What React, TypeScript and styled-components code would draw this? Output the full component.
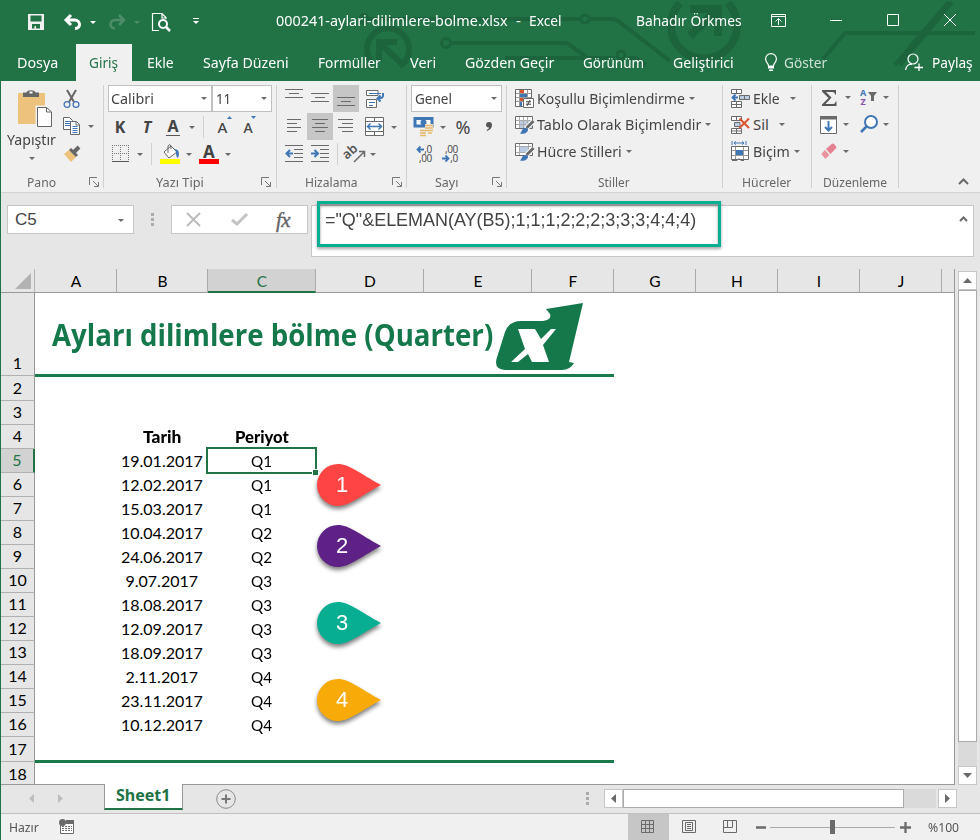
import React, { useLayoutEffect, useRef, useState } from "react";
import styled, { createGlobalStyle, css } from "styled-components";

const UI = `"Noto Sans", "Open Sans", sans-serif`;
const CELL = `Lato, "Open Sans", sans-serif`;
const ARIAL = `"Liberation Sans", Arial, sans-serif`;
const GREEN = "#217346";
const GREY = "#6a6a6a";
const BLUE = "#3f76b5";

const Global = createGlobalStyle`
  *, *::before, *::after { box-sizing: border-box; }
  body { margin: 0; background: #e6e6e6; overflow: hidden; }
`;

/* ---------- text that is condensed or widened to a given width ---------- */
const FitBox = styled.span<{ $w: number; $ml: number; $dy: number }>`
  display: block;
  flex: none;
  width: ${(p) => p.$w}px;
  margin-left: ${(p) => p.$ml}px;
  white-space: nowrap;
  ${(p) => p.$dy !== 0 && css`transform: translateY(${p.$dy}px);`}
`;
const FitInner = styled.span`
  display: inline-block;
  transform-origin: 0 50%;
`;
function Fit({ w, ml = 0, dy = 0, children }: { w: number; ml?: number; dy?: number; children: React.ReactNode }) {
  const ref = useRef<HTMLSpanElement>(null);
  const [scale, setScale] = useState(1);
  useLayoutEffect(() => {
    if (ref.current) setScale(w / ref.current.offsetWidth);
  }, [w]);
  return (
    <FitBox $w={w} $ml={ml} $dy={dy}>
      <FitInner ref={ref} style={{ transform: `scaleX(${scale})` }}>{children}</FitInner>
    </FitBox>
  );
}

const Svg = styled.svg<{ $ml: number; $mt: number }>`
  display: block;
  flex: none;
  overflow: visible;
  margin-left: ${(p) => p.$ml}px;
  margin-top: ${(p) => p.$mt}px;
`;
type IcProps = { w: number; h: number; ml?: number; mt?: number; children?: React.ReactNode };
const Ic = ({ w, h, ml = 0, mt = 0, children }: IcProps) => (
  <Svg width={w} height={h} viewBox={`0 0 ${w} ${h}`} fill="none" $ml={ml} $mt={mt}>{children}</Svg>
);
const Caret = ({ ml = 0, mt = -1, color = GREY }: { ml?: number; mt?: number; color?: string }) => (
  <Ic w={6} h={3} ml={ml} mt={mt}><path d="M0 0H6L3 3Z" fill={color} /></Ic>
);

/* ---------- window ---------- */
const Window = styled.div`
  width: 980px;
  height: 840px;
  display: flex;
  flex-direction: column;
  border-left: 1px solid ${GREEN};
  background: #e6e6e6;
  overflow: hidden;
`;
const Header = styled.header`
  position: relative;
  height: 81px;
  margin-left: -1px;
  flex: none;
  background: ${GREEN};
  color: #fff;
  font: 15px/20px ${UI};
`;
const Circuit = styled.svg`
  position: absolute;
  inset: 0;
`;
const TitleBar = styled.div`
  position: relative;
  height: 44px;
  display: flex;
  align-items: center;
`;
const Tabs = styled.nav`
  position: relative;
  height: 37px;
  display: flex;
  align-items: center;
  ${FitBox} { padding-bottom: 2px; }
`;
const ActiveTab = styled.div`
  width: 56px;
  height: 37px;
  margin-left: 18px;
  display: flex;
  align-items: center;
  background: #f0f0f0;
  color: ${GREEN};
`;
const Muted = styled.div`color: #cfe0d6;`;

/* ---------- ribbon ---------- */
const Ribbon = styled.section`
  height: 112px;
  flex: none;
  display: flex;
  padding-top: 4px;
  background: #f0f0f0;
  border-bottom: 1px solid #d2d2d2;
  color: #444;
  font: 15px/20px ${UI};
`;
const Group = styled.div<{ $w: number }>`
  width: ${(p) => p.$w}px;
  height: 103px;
  flex: none;
  display: flex;
  flex-direction: column;
  border-right: 1px solid #d0d0d0;
`;
const Row = styled.div<{ $mt?: number }>`
  height: 27px;
  margin-top: ${(p) => p.$mt ?? 0}px;
  display: flex;
  align-items: center;
  ${FitBox} { padding-bottom: 2px; }
`;
const Caption = styled.div`
  height: 20px;
  margin-top: auto;
  margin-bottom: -4px;
  display: flex;
  align-items: center;
  color: #666;
  font-size: 13px;
`;
const Columns = styled.div`display: flex;`;
const PasteColumn = styled.div`
  width: 60px;
  padding-top: 4px;
  display: flex;
  flex-direction: column;
`;
const ToolColumn = styled.div`flex: 1;`;
const Combo = styled.div<{ $w: number; $ml?: number }>`
  width: ${(p) => p.$w}px;
  height: 27px;
  flex: none;
  margin-left: ${(p) => p.$ml ?? 0}px;
  display: flex;
  align-items: center;
  justify-content: space-between;
  padding-right: 4px;
  background: #fff;
  border: 1px solid #c0c0c0;
`;
const Pressed = styled.div<{ $ml: number }>`
  width: 26px;
  height: 27px;
  flex: none;
  margin-left: ${(p) => p.$ml}px;
  display: flex;
  align-items: center;
  justify-content: center;
  background: #c6c6c6;
`;
const Divider = styled.i<{ $ml: number }>`
  width: 1px;
  height: 22px;
  margin-left: ${(p) => p.$ml}px;
  background: #d0d0d0;
`;
const Glyph = styled.span<{ $ml: number; $w: number; $size?: number; $italic?: boolean; $dy?: number; $weight?: number }>`
  width: ${(p) => p.$w}px;
  flex: none;
  display: flex;
  justify-content: center;
  margin-left: ${(p) => p.$ml}px;
  font-size: ${(p) => p.$size ?? 16}px;
  font-weight: ${(p) => p.$weight ?? 700};
  font-style: ${(p) => (p.$italic ? "italic" : "normal")};
  line-height: 20px;
  transform: translateY(${(p) => p.$dy ?? 0}px);
`;
const Underlined = styled(Glyph)`
  line-height: 17px;
  border-bottom: 1px solid #555;
`;
const ColorLetter = styled(Glyph)`
  line-height: 15px;
  height: 20px;
  border-bottom: 5px solid #f00;
`;
const Decimals = styled.div<{ $ml: number }>`
  width: 16px;
  margin-left: ${(p) => p.$ml}px;
  display: flex;
  flex-direction: column;
  font: 10px/9px "Open Sans", sans-serif;
  letter-spacing: -.3px;
`;
const DecimalLine = styled.div<{ $end?: boolean }>`
  height: 9px;
  display: flex;
  align-items: center;
  justify-content: ${(p) => (p.$end ? "flex-end" : "space-between")};
`;
const Collapse = styled.div`
  flex: 1;
  display: flex;
  justify-content: flex-end;
  align-items: flex-end;
  padding: 0 11px 7px 0;
`;

const Launcher = ({ ml }: { ml: number }) => (
  <Ic w={10} h={10} ml={ml - 1} mt={0}>
    <path d="M.5 8V.5H8M4 4l5 5M9.5 5v4.5H5" stroke="#777" />
  </Ic>
);
const Lines = ({ w, rows, ml = 0, mt = 0 }: { w: number; rows: [number, number][]; ml?: number; mt?: number }) => (
  <Ic w={w} h={rows.length * 3 + (rows.length - 1)} ml={ml} mt={mt}>
    {rows.map(([a, b], i) => <path key={i} d={`M${a} ${i * 4 + 0.5}H${b}`} stroke={GREY} />)}
  </Ic>
);
const IndentIcon = ({ ml, out }: { ml: number; out?: boolean }) => (
  <Ic w={18} h={17} ml={ml}>
    <path d="M0 .5H18M9 4.5h9M9 8.5h9M9 12.5h9M0 16.5H18" stroke={GREY} />
    {out ? <path d="M8 8.5H2M5 5 1.5 8.5 5 12" stroke={BLUE} strokeWidth="2" /> : <path d="M0 8.5H6.5M3.5 5 7 8.5 3.5 12" stroke={BLUE} strokeWidth="2" />}
  </Ic>
);
const BrushIcon = ({ full }: { full?: boolean }) => (
  <Ic w={19} h={18} ml={8} mt={-2}>
    <path d="M.5.5H17.5V12.5H.5Z" fill="#fff" stroke={GREY} />
    {full ? (
      <><path d="M5 5H17V12H5Z" fill="#b9cce4" /><path d="M1 4.5H17M1 8.5H17M4.5 1V12M8.5 1V12M12.5 1V12" stroke="#aaa" /></>
    ) : (
      <><path d="M5 4H13V9H5Z" fill="#b9cce4" /><path d="M1 3.5H17M4.5 1V12M13.5 1V12M1 9.5H17" stroke="#aaa" /></>
    )}
    <path d="M18.5 5 11 12.5" stroke="#fff" strokeWidth="5" />
    <path d="M18.5 5 11.5 12" stroke={GREY} strokeWidth="3" />
    <path d="M5 17.5C7 16 7 12 10 12c3 0 4 2 2 4-2 2-5 2-7 1.5Z" fill={BLUE} />
  </Ic>
);

const RibbonView = () => (
  <Ribbon>
    <Group $w={103}>
      <Columns>
        <PasteColumn>
          <Ic w={36} h={38} ml={16}>
            <path d="M1 4H28V35H1Z" fill="#ecc27d" />
            <path d="M6 8V3.5h3.5C10 .5 18 .5 18.500 3.500H22V8Z" fill="#666" />
            <path d="M12.500 2.500h3v2h-3Z" fill="#fff" />
            <path d="M18.500 16.500H30L36 22V38H18.500Z" fill="#f0f0f0" />
            <path d="M20.500 18.500H29.500L34.500 23V37.500H20.500Z" fill="#fff" stroke="#666" />
            <path d="M29.500 18.500V23H34.500" stroke="#666" />
          </Ic>
          <Fit w={49} ml={6} dy={2}>Yapıştır</Fit>
          <Caret ml={28} mt={10} />
        </PasteColumn>
        <ToolColumn>
          <Row>
            <Ic w={17} h={18} ml={2}>
              <path d="M4 0 11 12M13 0 6 12" stroke="#666" strokeWidth="2" />
              <circle cx="4" cy="14.500" r="2.900" stroke={BLUE} strokeWidth="1.300" />
              <circle cx="13" cy="14.500" r="2.900" stroke={BLUE} strokeWidth="1.300" />
            </Ic>
          </Row>
          <Row $mt={1}>
            <Ic w={17} h={18} ml={2} mt={-1}>
              <path d="M.5.5h6l3 3V12.500H.5Z" fill="#fff" stroke="#666" />
              <path d="M2 4.500h5M2 6.500h5M2 8.500h5" stroke={BLUE} />
              <path d="M7.500 4.500h6l3 3V17.500h-9Z" fill="#fff" stroke="#666" />
              <path d="M13 5v3h3" stroke="#666" /><path d="M9.500 9.500h5M9.500 11.500h5M9.500 13.500h5M9.500 15.500h5" stroke={BLUE} />
            </Ic>
            <Caret ml={8} />
          </Row>
          <Row>
            <Ic w={17} h={16} ml={3}>
              <path d="M0 8 5 4 12 11 7 16Z" fill="#ecc27d" />
              <path d="M6 3 13 10" stroke="#666" strokeWidth="3" /><path d="M9.500 6.500 15 1" stroke="#666" strokeWidth="4" />
            </Ic>
          </Row>
        </ToolColumn>
      </Columns>
      <Caption><Fit w={29} ml={26}>Pano</Fit><Launcher ml={34} /></Caption>
    </Group>

    <Group $w={173}>
      <Row>
        <Combo $w={104} $ml={4}><Fit w={43} ml={2}>Calibri</Fit><Caret /></Combo>
        <Combo $w={60}><Fit w={15} ml={3}>11</Fit><Caret /></Combo>
      </Row>
      <Row $mt={1}>
        <Glyph $w={10} $ml={11}>K</Glyph>
        <Glyph $w={10} $ml={17} $italic>T</Glyph>
        <Underlined $w={14} $ml={14}>A</Underlined>
        <Caret ml={9} mt={1} />
        <Divider $ml={8} />
        <Glyph $w={11} $ml={13} $size={15} $weight={500}>A</Glyph>
        <Ic w={5} h={3} ml={-1} mt={-18}><path d="M0 3H5L2.500 0Z" fill={BLUE} /></Ic>
        <Glyph $w={10} $ml={11} $size={14} $weight={500} $dy={1}>A</Glyph>
        <Ic w={5} h={3} ml={-2} mt={-18}><path d="M0 0H5L2.500 3Z" fill={BLUE} /></Ic>
      </Row>
      <Row>
        <Ic w={17} h={17} ml={8}>
          <path d="M.5 0V17M16.500 0V17M8.500 0V17M0 .5H17M0 8.500H17" stroke="#777" strokeDasharray="1 1" />
          <path d="M0 16.500H17" stroke="#555" />
        </Ic>
        <Caret ml={8} mt={1} />
        <Divider $ml={8} />
        <Ic w={20} h={20} ml={8}>
          <path d="M4 8 11 2 17 8 9 14Z" fill="#fff" stroke="#666" /><path d="M8 9V2q2-3 3 0v3" stroke="#666" />
          <path d="M14 5c5 0 6 4 4 9-2-1-2-5-2-6Z" fill={BLUE} />
          <path d="M0 15H20V20H0Z" fill="#ff0" />
        </Ic>
        <Caret ml={6} mt={1} />
        <ColorLetter $w={20} $ml={7} $size={17}>A</ColorLetter>
        <Caret ml={6} mt={1} />
      </Row>
      <Caption><Fit w={48} ml={52}>Yazı Tipi</Fit><Launcher ml={58} /></Caption>
    </Group>

    <Group $w={130}>
      <Row>
        <Lines w={18} ml={8} mt={-9} rows={[[0, 18], [4, 14], [0, 18]]} />
        <Lines w={18} ml={8} rows={[[0, 18], [4, 14], [0, 18]]} />
        <Pressed $ml={4}><Lines w={18} mt={8} rows={[[0, 18], [4, 14], [0, 18]]} /></Pressed>
        <Ic w={19} h={18} ml={7}>
          <path d="M.5.500H12V5.500H.5ZM.5 9.500H10.500V17.500H.5Z" fill="#fff" stroke={GREY} />
          <path d="M3 3.500H15M3 12.500h6M3 15.500h4" stroke={BLUE} strokeWidth="1.200" />
          <path d="M17 3v2.500c0 2-2 3-5 3M14.500 5.500 11.500 8.500l3 3" stroke={BLUE} strokeWidth="2" />
        </Ic>
      </Row>
      <Row $mt={1}>
        <Lines w={15} ml={10} rows={[[0, 14], [0, 10], [0, 14], [0, 10]]} />
        <Pressed $ml={5}><Lines w={16} rows={[[0, 16], [3, 13], [0, 16], [3, 13]]} /></Pressed>
        <Lines w={15} ml={5} rows={[[0, 15], [4, 15], [0, 15], [4, 15]]} />
        <Ic w={19} h={19} ml={12} mt={-1}>
          <path d="M.5.500H18.500V18.500H.5ZM.5 4.500h18M.5 14.500h18M9.500.500v4M9.500 14.500v4" fill="#fff" stroke={GREY} />
          <path d="M3 9.500H16M5.500 6.500 2.500 9.500l3 3M13.500 6.500l3 3-3 3" stroke={BLUE} strokeWidth="1.500" />
        </Ic>
        <Caret ml={7} mt={1} />
      </Row>
      <Row>
        <IndentIcon ml={8} out />
        <IndentIcon ml={8} />
        <Divider $ml={8} />
        <Ic w={19} h={18} ml={8}>
          <text x="0" y="5" fontSize="13" fontWeight="600" fill="#555" transform="rotate(-42 6 9) translate(-2 5)">ab</text>
          <path d="M8 17 18 7M13 6.500H18.500V12" stroke={GREY} strokeWidth="1.500" />
        </Ic>
        <Caret ml={5} mt={1} />
      </Row>
      <Caption><Fit w={53} ml={28}>Hizalama</Fit><Launcher ml={35} /></Caption>
    </Group>

    <Group $w={100}>
      <Row><Combo $w={91} $ml={4}><Fit w={37} ml={3}>Genel</Fit><Caret /></Combo></Row>
      <Row $mt={1}>
        <Ic w={20} h={19} ml={7}>
          <path d="M1 1.500H18V9H1Z" fill="#fff" stroke={BLUE} strokeWidth="3" />
          <circle cx="9.500" cy="5.500" r="3" fill={BLUE} />
          <path d="M11 7h8v11H5v-5h6Z" fill="#f0f0f0" />
          <path d="M11 8.500h8M11 11h8M12 13.500h7M6 13.500h6M6 16h6M6 18.500h6M14 16h4" stroke="#e5b76c" strokeWidth="1.700" />
        </Ic>
        <Caret ml={6} mt={1} />
        <Glyph $w={16} $ml={9} $size={18} $weight={400}>%</Glyph>
        <Ic w={6} h={9} ml={15} mt={-1}><path d="M0 3a3 3 0 1 1 6 0c0 3-2 5-5 6l-.4-1C2 7.500 3 6.500 3 5.500 1 5.500 0 4.500 0 3Z" fill="#555" /></Ic>
      </Row>
      <Row>
        <Decimals $ml={9}>
          <DecimalLine><Ic w={8} h={7}><path d="M8 3.500H2M4.500.5l-3 3 3 3" stroke={BLUE} strokeWidth="1.800" /></Ic>,0</DecimalLine>
          <DecimalLine $end>,00</DecimalLine>
        </Decimals>
        <Decimals $ml={10}>
          <DecimalLine $end>,00</DecimalLine>
          <DecimalLine><Ic w={8} h={7}><path d="M0 3.500H6M3.500.5l3 3-3 3" stroke={BLUE} strokeWidth="1.800" /></Ic>,0</DecimalLine>
        </Decimals>
      </Row>
      <Caption><Fit w={23} ml={28}>Sayı</Fit><Launcher ml={35} /></Caption>
    </Group>

    <Group $w={216}>
      <Row>
        <Ic w={19} h={19} ml={8} mt={-1}>
          <path d="M.5.500H16.500V17.500H.5Z" fill="#fff" stroke={GREY} />
          <path d="M1 4.500H16M1 8.500H16M1 12.500H16M4.500 1V17M12.500 1V17" stroke="#999" />
          <path d="M5 1h4v3H5ZM5 9h3v3H5Z" fill="#d9532c" /><path d="M5 5h7v3H5ZM5 13h2v4H5Z" fill={BLUE} />
          <path d="M8.500 9.500H18.500V18.500H8.500Z" fill="#fff" stroke={GREY} />
          <path d="M11 12.800h5M11 15.200h5M15 11l-3 6" stroke="#444" />
        </Ic>
        <Fit w={148} ml={3}>Koşullu Biçimlendirme</Fit><Caret ml={4} />
      </Row>
      <Row>
        <BrushIcon full />
        <Fit w={164} ml={3} dy={-1}>Tablo Olarak Biçimlendir</Fit><Caret ml={4} mt={-2} />
      </Row>
      <Row>
        <BrushIcon />
        <Fit w={85} ml={3} dy={-1}>Hücre Stilleri</Fit><Caret ml={4} mt={-2} />
      </Row>
      <Caption><Fit w={32} ml={91}>Stiller</Fit></Caption>
    </Group>

    <Group $w={89}>
      <Row>
        <Ic w={19} h={19} ml={8} mt={-1}>
          <path d="M.5.500H10.500V4.500H.5ZM5.500.500v4M.5 12.500H10.500V18.500H.5ZM.5 15.500H10.500M5.500 12.500v6" fill="#fff" stroke={GREY} />
          <path d="M8.500 6.500H18.500V10.500H8.500ZM13.500 6.500v4" fill="#b9cce4" stroke={GREY} />
          <path d="M7 8.500H1.500M4.500 5.500l-3 3 3 3" stroke={BLUE} strokeWidth="1.800" />
        </Ic>
        <Fit w={27} ml={3}>Ekle</Fit><Caret ml={10} />
      </Row>
      <Row>
        <Ic w={19} h={18} ml={8} mt={-2}>
          <path d="M.5.500H10.500V4.500H.5ZM5.500.500v4M.5 12.500H10.500V17.500H.5ZM.5 15H10.500M5.500 12.500v5" fill="#fff" stroke={GREY} />
          <path d="M3.500 6.500H9V10.500H3.500Z" fill="#b9cce4" stroke={GREY} />
          <path d="M8.500 2.500 18 12M18 2.500 8.500 12" stroke="#d9532c" strokeWidth="2" />
        </Ic>
        <Fit w={16} ml={3} dy={-1}>Sil</Fit><Caret ml={10} mt={-2} />
      </Row>
      <Row>
        <Ic w={18} h={20} ml={8} mt={-4}>
          <path d="M1 0V4M15 0V4M3 2H13M5 .3 3 2l2 1.700M11 .3 13 2l-2 1.700" stroke={BLUE} />
          <path d="M.5 5.500H17.500V18.500H.5Z" fill="#fff" stroke={GREY} />
          <path d="M1 9.500H17M1 14.500H17M4.500 6V18M12.500 6V18" stroke="#999" />
          <path d="M5 9H12V14H5Z" fill={BLUE} /><path d="M1 19.500h5l2-2 2 2h3" stroke={GREY} />
        </Ic>
        <Fit w={37} ml={4} dy={-1}>Biçim</Fit><Caret ml={4} mt={-2} />
      </Row>
      <Caption><Fit w={49} ml={19}>Hücreler</Fit></Caption>
    </Group>

    <Group $w={87}>
      <Row>
        <Ic w={15} h={16} ml={10} mt={-2}>
          <path d="M0 0H14V4.500H13Q13 2 10.500 2H4L9.500 7.500 3.500 14H11Q13.500 14 13.500 11.500H14.500V16H0V14.500L6.500 8 0 1.500Z" fill="#555" />
        </Ic>
        <Caret ml={8} mt={-2} />
        <Ic w={18} h={18} ml={9} mt={-3}>
          <text x="0" y="8" fontSize="9" fontWeight="700" fill={BLUE}>A</text>
          <text x="0.500" y="16.500" fontSize="9" fontWeight="700" fill="#8a50a8">Z</text>
          <path d="M8 4H17L14 8V13H11V8Z" fill={GREY} />
        </Ic>
        <Caret ml={5} mt={-2} />
      </Row>
      <Row>
        <Ic w={17} h={18} ml={8} mt={-2}>
          <path d="M.5.500H16.500V17.500H.5Z" fill="#fff" stroke={GREY} /><path d="M0 0H17V3.500H0Z" fill={GREY} />
          <path d="M8.500 5V14M5 11l3.500 3.500L12 11" stroke={BLUE} strokeWidth="2" />
        </Ic>
        <Caret ml={6} mt={-2} />
        <Ic w={18} h={18} ml={11} mt={-3}><circle cx="11" cy="7" r="6" fill="#fff" stroke={BLUE} strokeWidth="2" /><path d="M7 11 1 17" stroke={BLUE} strokeWidth="2.500" /></Ic>
        <Caret ml={5} mt={-2} />
      </Row>
      <Row>
        <Ic w={16} h={16} ml={9} mt={-3}>
          <path d="M5 6 11 .8q1-.8 2 .2l2 2.300q1 1 0 2L9.500 11Z" fill="#e4808f" /><path d="M4 7 8.500 12 5.500 15Q4.500 16 3.500 15L1 12Q0 11 1 10Z" fill="#e9949f" />
        </Ic>
        <Caret ml={6} mt={-2} />
      </Row>
      <Caption><Fit w={64} ml={11}>Düzenleme</Fit></Caption>
    </Group>
    <Collapse><Ic w={11} h={7}><path d="M1 6 5.500 1.500 10 6" stroke={GREY} strokeWidth="2" /></Ic></Collapse>
  </Ribbon>
);

/* ---------- formula bar ---------- */
const FormulaBar = styled.section`
  position: relative;
  height: 76px;
  flex: none;
  display: flex;
  align-items: flex-start;
  padding: 12px 0 0 6px;
  font: 17px/20px ${ARIAL};
  color: #444;
`;
const Box = styled.div<{ $w: number; $h?: number; $ml?: number }>`
  width: ${(p) => p.$w}px;
  height: ${(p) => p.$h ?? 29}px;
  margin-left: ${(p) => p.$ml ?? 0}px;
  flex: none;
  display: flex;
  align-items: ${(p) => (p.$h ? "flex-start" : "center")};
  background: #fff;
  border: 1px solid #c6c6c6;
`;
const FormulaText = styled.div`
  padding-top: 4px;
  font-size: 18px;
`;
const Highlight = styled.div`
  position: absolute;
  left: 316px;
  top: 8px;
  width: 404px;
  height: 46px;
  border: 3px solid #0aae92;
  box-shadow: 0 2px 3px rgba(0, 0, 0, .35), inset 0 2px 3px rgba(0, 0, 0, .4);
`;
const Fx = styled.span`
  margin-left: 28px;
  font: italic 400 21px/20px "Liberation Serif", serif;
  color: #666;
  letter-spacing: -.5px;
  -webkit-text-stroke: .4px #666;
`;
const Dots = ({ ml, mt }: { ml: number; mt: number }) => (
  <Ic w={3} h={13} ml={ml} mt={mt}><path d="M0 0h3v3H0ZM0 5h3v3H0ZM0 10h3v3H0Z" fill="#ababab" /></Ic>
);

/* ---------- sheet ---------- */
const COLS: [string, number][] = [["A", 82], ["B", 91], ["C", 108], ["D", 108], ["E", 108], ["F", 82], ["G", 82], ["H", 82], ["I", 82], ["J", 82]];
const Main = styled.main`
  height: 515px;
  flex: none;
  display: flex;
`;
const Sheet = styled.div`
  width: 954px;
  height: 516px;
  flex: none;
  overflow: hidden;
  font: 16px/20px ${CELL};
  color: #000;
  background: #fff;
  border-right: 1px solid #999;
  border-bottom: 1px solid #999;
`;
const HeadRow = styled.div`
  height: 24px;
  display: flex;
  background: #e6e6e6;
  border-bottom: 1px solid #999;
`;
const Corner = styled.div`
  width: 34px;
  flex: none;
  padding: 4px 0 0 14px;
  border-right: 1px solid #b5b5b5;
`;
const ColHead = styled.div<{ $w: number; $on?: boolean }>`
  width: ${(p) => p.$w}px;
  flex: none;
  height: 24px;
  padding-top: 2px;
  padding-left: 1px;
  text-align: center;
  font-size: 15.5px;
  border-right: 1px solid #aaa;
  ${(p) => p.$on && css`background: #d2d2d2; color: ${GREEN}; border-bottom: 2px solid ${GREEN};`}
`;
const Line = styled.div<{ $h: number; $title?: boolean }>`
  position: relative;
  height: ${(p) => p.$h}px;
  display: flex;
  align-items: ${(p) => (p.$title ? "flex-end" : "center")};
`;
const RowHead = styled.div<{ $on?: boolean }>`
  align-self: stretch;
  width: 34px;
  flex: none;
  display: flex;
  align-items: flex-end;
  justify-content: center;
  padding-bottom: 2px;
  background: ${(p) => (p.$on ? "#d2d2d2" : "#e6e6e6")};
  color: ${(p) => (p.$on ? GREEN : "#000")};
  border-bottom: 1px solid #b0b0b0;
  border-right: ${(p) => (p.$on ? `2px solid ${GREEN}` : "1px solid #999")};
`;
const Cell = styled.div<{ $w: number; $bold?: boolean }>`
  position: relative;
  width: ${(p) => p.$w}px;
  height: 24px;
  flex: none;
  display: flex;
  align-items: center;
  justify-content: center;
  padding-right: 1px;
  font-weight: ${(p) => (p.$bold ? 900 : 400)};
`;
const Selection = styled.i`
  position: absolute;
  left: -2px;
  top: -2px;
  width: 111px;
  height: 27px;
  border: 2px solid ${GREEN};
  &::after {
    content: "";
    position: absolute;
    right: -3px;
    bottom: -3px;
    width: 6px;
    height: 6px;
    background: ${GREEN};
    border: solid #fff;
    border-width: 1px 0 0 1px;
  }
`;
const Rule = styled.i`
  position: absolute;
  left: 34px;
  bottom: -1px;
  width: 579px;
  height: 3px;
  background: #1a7a4c;
  z-index: 1;
`;
const SheetTitle = styled.div`
  height: 83px;
  display: flex;
  align-items: flex-start;
  padding-top: 22px;
  font: 700 30px/40px "Open Sans", ${CELL};
  color: #14784b;
`;
const Pin = styled.div<{ $top: number }>`
  position: absolute;
  left: 316px;
  top: ${(p) => p.$top}px;
  width: 65px;
  height: 42px;
  filter: drop-shadow(0 3px 2px rgba(0, 0, 0, .5));
  z-index: 2;
`;
const PinLabel = styled.span`
  position: absolute;
  left: 0;
  top: 0;
  width: 50px;
  text-align: center;
  font: 22px/42px ${ARIAL};
  color: #fff;
`;

type RowData = { date: string; period: string; w?: number };
const DATA: RowData[] = [
  { date: "19.01.2017", period: "Q1" }, { date: "12.02.2017", period: "Q1" }, { date: "15.03.2017", period: "Q1" },
  { date: "10.04.2017", period: "Q2" }, { date: "24.06.2017", period: "Q2" }, { date: "9.07.2017", period: "Q3", w: 73 },
  { date: "18.08.2017", period: "Q3" }, { date: "12.09.2017", period: "Q3" }, { date: "18.09.2017", period: "Q3" },
  { date: "2.11.2017", period: "Q4", w: 73 }, { date: "23.11.2017", period: "Q4" }, { date: "10.12.2017", period: "Q4" },
];
const PINS: { label: string; color: string; row: number; top: number }[] = [
  { label: "1", color: "#ff4444", row: 5, top: 15 },
  { label: "2", color: "#5e2186", row: 8, top: 4 },
  { label: "3", color: "#08ae92", row: 11, top: 9 },
  { label: "4", color: "#f8aa08", row: 14, top: 14 },
];

const VBar = styled.div`
  width: 25px;
  padding: 2px 0 0 3px;
  display: flex;
  flex-direction: column;
`;
const ScrollButton = styled.div`
  width: 19px;
  height: 19px;
  flex: none;
  display: flex;
  align-items: center;
  justify-content: center;
  background: #fff;
  border: 1px solid #c6c6c6;
`;
const Thumb = styled.div<{ $w: number; $h: number }>`
  width: ${(p) => p.$w}px;
  height: ${(p) => p.$h}px;
  flex: none;
  background: #fff;
  border: 1px solid #ababab;
`;
const Track = styled.div<{ $w: number; $h: number; $gap?: number }>`
  width: ${(p) => p.$w}px;
  height: ${(p) => p.$h}px;
  margin-right: ${(p) => p.$gap ?? 0}px;
  flex: none;
  background: #dadada;
`;

/* ---------- bottom bars ---------- */
const SheetBar = styled.div`
  height: 29px;
  flex: none;
  display: flex;
  align-items: flex-start;
`;
const SheetTab = styled.div`
  width: 79px;
  height: 26px;
  margin-left: 41px;
  padding-top: 1px;
  display: flex;
  background: #fff;
  color: ${GREEN};
  border: solid #999;
  border-width: 0 1px;
  border-bottom: 2px solid ${GREEN};
  font: 700 16px/20px ${UI};
  position: relative;
`;
const HBar = styled.div`
  height: 19px;
  display: flex;
  margin: 5px 0 0 15px;
`;
const StatusBar = styled.footer`
  height: 27px;
  flex: none;
  display: flex;
  align-items: center;
  background: #f0f0f0;
  border-top: 1px solid #c0c0c0;
  color: #555;
  font: 13px/18px ${UI};
`;
const ViewOn = styled.div`
  width: 41px;
  height: 27px;
  margin-left: 554px;
  display: flex;
  align-items: center;
  justify-content: center;
  background: #c6c6c6;
`;

export default function App() {
  return (
    <Window>
      <Global />
      <Header>
        <Circuit width="980" height="81" viewBox="0 0 980 81" fill="none" stroke="#1c653c">
          <circle cx="364" cy="19" r="4" strokeWidth="4" /><path d="M370 19H580M590 19h22q3 0 6 2L670 61" strokeWidth="4" />
          <circle cx="585" cy="19" r="4" strokeWidth="3" />
          <path d="M373 64a21 21 0 1 1 30 0" strokeWidth="6" /><path d="M379 62V42H397M382 45 404 66" strokeWidth="6" />
          <circle cx="446" cy="43" r="4.500" strokeWidth="3" /><path d="M451 43H567L588 58M505 58H615M628 58h8l10 7" strokeWidth="4" />
          <circle cx="621" cy="55" r="4" strokeWidth="3" />
          <path d="M680 3a33 33 0 1 0 48 0" strokeWidth="8" /><path d="M690 9H718V36M716 11 690 36" strokeWidth="8" />
          <path d="M823 59 845 33H975M900 65 952 2M920 35 949 2M895 65 920 35" strokeWidth="4" />
        </Circuit>
        <TitleBar>
          <Ic w={16} h={16} ml={28}><path d="M0 0H16V16H0Z" fill="#f0f0f0" /><path d="M2.500 1.500h11v6h-11ZM4 10h8v4.500H8V12H6.500v2.500H4Z" fill={GREEN} /></Ic>
          <Ic w={18} h={16} ml={20}><path d="M7 1 2 6l5 5M2 6h9c5 0 7 8 0 8.500" stroke="#fff" strokeWidth="3" /></Ic>
          <Ic w={6} h={3} ml={8}><path d="M0 0H6L3 3Z" fill="#fff" /></Ic>
          <Ic w={18} h={16} ml={12}><path d="M11 1l5 5-5 5M16 6H7c-5 0-7 8 0 8.500" stroke="#4d8d69" strokeWidth="2.500" /></Ic>
          <Ic w={6} h={3} ml={8}><path d="M0 0H6L3 3Z" fill="#4d8d69" /></Ic>
          <Ic w={19} h={19} ml={12}>
            <path d="M7 17.500H.5V.500H10l4 4V6M10 .500V5h4" stroke="#fff" strokeWidth="1.200" />
            <circle cx="11" cy="11" r="4" stroke="#fff" strokeWidth="2" /><path d="M14 14l4 4" stroke="#fff" strokeWidth="2.500" />
          </Ic>
          <Ic w={6} h={6} ml={22} mt={-2}><path d="M0 .500H6" stroke="#fff" /><path d="M0 3H6L3 6Z" fill="#fff" /></Ic>
          <Fit w={232} ml={77} dy={-2}>000241-aylari-dilimlere-bolme.xlsx</Fit>
          <Fit w={5} ml={8} dy={-2}>-</Fit>
          <Fit w={33} ml={8} dy={-2}>Excel</Fit>
          <Fit w={106} ml={74} dy={-2}>Bahadır Örkmes</Fit>
          <Ic w={15} h={13} ml={29} mt={-3}><path d="M.5.500H14.500V12.500H.5ZM.5 2.500h14M7.500 11V4.500M4.500 7.500l3-3 3 3" stroke="#fff" /></Ic>
          <Ic w={12} h={1} ml={44} mt={-4}><path d="M0 .500H12" stroke="#fff" /></Ic>
          <Ic w={12} h={12} ml={45} mt={-4}><path d="M.5.500H11.500V11.500H.5Z" stroke="#fff" /></Ic>
          <Ic w={12} h={12} ml={45} mt={-4}><path d="M0 0 12 12M12 0 0 12" stroke="#fff" /></Ic>
        </TitleBar>
        <Tabs>
          <Fit w={41} ml={17}>Dosya</Fit>
          <ActiveTab><Fit w={29} ml={13}>Giriş</Fit></ActiveTab>
          <Fit w={27} ml={15}>Ekle</Fit>
          <Fit w={86} ml={29}>Sayfa Düzeni</Fit>
          <Fit w={63} ml={29}>Formüller</Fit>
          <Fit w={26} ml={29}>Veri</Fit>
          <Fit w={89} ml={29}>Gözden Geçir</Fit>
          <Fit w={61} ml={29}>Görünüm</Fit>
          <Fit w={61} ml={29}>Geliştirici</Fit>
          <Ic w={12} h={18} ml={31} mt={-1}>
            <path d="M3.500 13C3.500 10 .6 9.500.6 6a5.400 5.400 0 0 1 10.800 0c0 3.500-2.900 4-2.900 7Z" stroke="#fff" strokeWidth="1.200" /><path d="M3 13H9V15.500H3ZM4 16.500H8V18H4Z" fill="#fff" />
          </Ic>
          <Muted><Fit w={43} ml={7}>Göster</Fit></Muted>
          <Ic w={18} h={18} ml={78} mt={-1}><circle cx="8" cy="6" r="5" stroke="#fff" strokeWidth="1.200" /><path d="M.6 17C1 13 4 11 7 11M14 10.500V18M9.500 14.500H18" stroke="#fff" strokeWidth="1.300" /></Ic>
          <Fit w={41} ml={9}>Paylaş</Fit>
        </Tabs>
      </Header>

      <RibbonView />

      <FormulaBar>
        <Box $w={127}><Fit w={22} ml={7}>C5</Fit><Caret ml={81} mt={1} /></Box>
        <Dots ml={17} mt={8} />
        <Box $w={137} $ml={17}>
          <Ic w={15} h={13} ml={14}><path d="M1 0 14 13M14 0 1 13" stroke="#bcbcbc" strokeWidth="2" /></Ic>
          <Ic w={17} h={13} ml={30}><path d="M1 7l5 4L16 1" stroke="#c4c4c4" strokeWidth="3" /></Ic>
          <Fx>fx</Fx>
        </Box>
        <Box $w={663} $h={52} $ml={3}>
          <FormulaText><Fit w={371} ml={13}>="Q"&amp;ELEMAN(AY(B5);1;1;1;2;2;2;3;3;3;4;4;4)</Fit></FormulaText>
          <Ic w={9} h={6} ml={263} mt={10}><path d="M1 5 4.500 1.500 8 5" stroke={GREY} strokeWidth="2" /></Ic>
        </Box>
        <Highlight />
      </FormulaBar>

      <Main>
        <Sheet>
          <HeadRow>
            <Corner><Ic w={16} h={16}><path d="M16 0V16H0Z" fill="#b2b2b2" /></Ic></Corner>
            {COLS.map(([c, w]) => <ColHead key={c} $w={w} $on={c === "C"}>{c}</ColHead>)}
          </HeadRow>
          <Line $h={83} $title>
            <RowHead>1</RowHead>
            <SheetTitle>
              <Fit w={441} ml={17}>Ayları dilimlere bölme (Quarter)</Fit>
              <Ic w={88} h={67} ml={3} mt={-12}>
                <path d="M87 0 73 59l5 1q-4 7-12 7H9Q-2 66 .5 56L9 29Q13 18 25 18H47Q56 17 54 11L50 6Z" fill="#14784b" />
                <path d="M22 26H39L45 36 55 26H60L47 42 53 59H36L32 51 22 59H15L29 46Z" fill="#fff" />
              </Ic>
            </SheetTitle>
            <Rule />
          </Line>
          <Line $h={25}><RowHead>2</RowHead></Line>
          <Line $h={24}><RowHead>3</RowHead></Line>
          <Line $h={24}>
            <RowHead>4</RowHead>
            <Cell $w={82} />
            <Cell $w={91} $bold><Fit w={38}>Tarih</Fit></Cell>
            <Cell $w={108} $bold><Fit w={54}>Periyot</Fit></Cell>
          </Line>
          {DATA.map((r, i) => (
            <Line $h={24} key={i}>
              <RowHead $on={i === 0}>{i + 5}</RowHead>
              <Cell $w={82} />
              <Cell $w={91}><Fit w={r.w ?? 82}>{r.date}</Fit></Cell>
              <Cell $w={108}>
                <Fit w={21}>{r.period}</Fit>
                {i === 0 && <Selection />}
              </Cell>
              {PINS.filter((p) => p.row === i + 5).map((p) => (
                <Pin key={p.label} $top={p.top} >
                  <svg width="65" height="42" viewBox="0 0 65 42">
                    <path d="M21 0C32 0 42 9 64 21 42 33 32 42 21 42A21 21 0 0 1 21 0Z" fill={p.color} />
                  </svg>
                  <PinLabel>{p.label}</PinLabel>
                </Pin>
              ))}
            </Line>
          ))}
          <Line $h={25}><RowHead>17</RowHead><Rule /></Line>
          <Line $h={25}><RowHead>18</RowHead></Line>
        </Sheet>
        <VBar>
          <ScrollButton><Ic w={9} h={5}><path d="M0 5H9L4.500 0Z" fill={GREY} /></Ic></ScrollButton>
          <Thumb $w={19} $h={452} />
          <Track $w={19} $h={24} />
          <ScrollButton><Ic w={9} h={5}><path d="M0 0H9L4.500 5Z" fill={GREY} /></Ic></ScrollButton>
        </VBar>
      </Main>

      <SheetBar>
        <Ic w={5} h={9} ml={28} mt={10}><path d="M5 0V9L0 4.500Z" fill="#bdbdbd" /></Ic>
        <Ic w={5} h={9} ml={24} mt={10}><path d="M0 0V9L5 4.500Z" fill="#bdbdbd" /></Ic>
        <SheetTab><Fit w={54} ml={11}>Sheet1</Fit></SheetTab>
        <Ic w={20} h={20} ml={33} mt={5}><circle cx="10" cy="10" r="9.300" stroke="#888" /><path d="M10 5.500v9M5.500 10h9" stroke="#777" strokeWidth="2" /></Ic>
        <Dots ml={350} mt={8} />
        <HBar>
          <ScrollButton><Ic w={5} h={9}><path d="M5 0V9L0 4.500Z" fill={GREY} /></Ic></ScrollButton>
          <Thumb $w={281} $h={19} />
          <Track $w={32} $h={19} $gap={2} />
          <ScrollButton><Ic w={5} h={9}><path d="M0 0V9L5 4.500Z" fill={GREY} /></Ic></ScrollButton>
        </HBar>
      </SheetBar>
      <StatusBar>
        <Fit w={30} ml={8}>Hazır</Fit>
        <Ic w={15} h={15} ml={20} mt={-2}>
          <path d="M1.500 3.500H14.500V14.500H1.500Z" fill="#fff" stroke={GREY} /><path d="M7 1H15V5H7Z" fill={GREY} /><circle cx="3.500" cy="3.500" r="3.500" fill={GREY} />
          <path d="M3 7.500H13M3 9.500H13M3 11.500H13" stroke={GREY} strokeDasharray="2 1" />
        </Ic>
        <ViewOn><Ic w={13} h={13} ml={-2} mt={-2}><path d="M.5.500H12.500V12.500H.5ZM.5 4.500h12M.5 8.500h12M4.500.500v12M8.500.500v12" stroke={GREY} /></Ic></ViewOn>
        <Ic w={14} h={13} ml={13} mt={-2}><path d="M.5.500H13.500V12.500H.5ZM3.500 2.500h7v8h-7ZM5 4.500h4M5 6.500h4M5 8.500h4" stroke={GREY} /></Ic>
        <Ic w={14} h={13} ml={27} mt={-2}><path d="M.5.500H13.500V12.500H.5ZM4.500.500v7M.5 7.500h9v-7" stroke={GREY} /></Ic>
        <Ic w={10} h={3} ml={19}><path d="M0 1.500H10" stroke={GREY} strokeWidth="2.500" /></Ic>
        <Ic w={125} h={14} ml={4}><path d="M0 7.500H125" stroke="#aaa" /><path d="M60 0h5v14h-5Z" fill={GREY} /></Ic>
        <Ic w={11} h={11} ml={5}><path d="M0 5.500H11M5.500 0V11" stroke={GREY} strokeWidth="2.300" /></Ic>
        <Fit w={31} ml={17}>%100</Fit>
      </StatusBar>
    </Window>
  );
}
